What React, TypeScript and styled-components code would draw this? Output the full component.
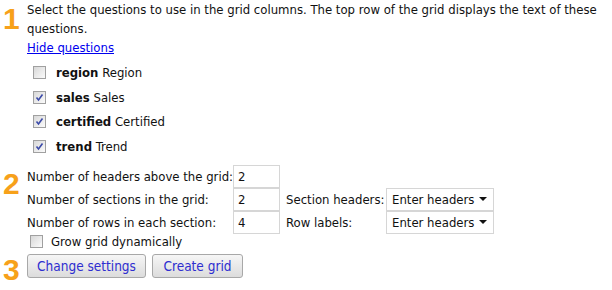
import React from "react";
import styled, { createGlobalStyle } from "styled-components";

const Global = createGlobalStyle`
  html, body { margin: 0; padding: 0; background: #fff; }
  body { font-family: "DejaVu Sans Condensed", "DejaVu Sans", Tahoma, sans-serif; font-size: 13px; color: #111; }
`;

const Page = styled.div`
  width: 612px;
  height: 290px;
  padding-top: 0;
  box-sizing: border-box;
  display: flex;
  flex-direction: column;
`;

const Step = styled.div<{ $mt?: number }>`
  display: grid;
  grid-template-columns: 27px 1fr;
  margin-top: ${(p) => p.$mt ?? 0}px;
`;

const StepNum = styled.div<{ $pt?: number }>`
  color: #f7a11a;
  font-family: "Liberation Sans", Arial, sans-serif;
  font-weight: bold;
  font-size: 30px;
  line-height: 30px;
  padding-left: 3px;
  padding-top: ${(p) => p.$pt ?? 0}px;
`;

const Body = styled.div`
  display: flex;
  flex-direction: column;
`;

const Para = styled.div`
  line-height: 19px;
  width: 580px;
`;

const Link = styled.a`
  color: #0000ee;
  text-decoration: underline;
  line-height: 19px;
  cursor: pointer;
  align-self: flex-start;
`;

const CheckList = styled.div<{ $m?: string }>`
  display: flex;
  flex-direction: column;
  margin: ${(p) => p.$m ?? "3px 0 0 6px"};
`;

const CheckRow = styled.label<{ $h?: number; $gap?: number }>`
  display: flex;
  align-items: center;
  height: ${(p) => p.$h ?? 24.7}px;
  gap: ${(p) => p.$gap ?? 10}px;
`;

const Box = styled.span`
  width: 11px;
  height: 11px;
  border: 1px solid #a0a0a0;
  background: linear-gradient(135deg, #d8d8d8, #fbfbfb);
  display: inline-flex;
  align-items: center;
  justify-content: center;
`;

const Name = styled.b`
  font-weight: bold;
`;

const Check = ({ on }: { on: boolean }) => (
  <Box>
    {on && (
      <svg width="9" height="9" viewBox="0 0 9 9">
        <path d="M1.5 4.5 L3.5 7 L7.5 1.5" stroke="#3b4aa8" strokeWidth="1.6" fill="none" />
      </svg>
    )}
  </Box>
);

const FormGrid = styled.div`
  display: grid;
  grid-template-columns: 206px 47px 106px 108px;
  grid-auto-rows: 23px;
  align-items: center;
`;

const Input = styled.div`
  box-sizing: border-box;
  width: 47px;
  height: 23px;
  border: 1px solid #d6d6d6;
  padding-left: 4px;
  display: flex;
  align-items: center;
`;

const Select = styled.div`
  width: 108px;
  height: 23px;
  box-sizing: border-box;
  border: 1px solid #d6d6d6;
  display: flex;
  align-items: center;
  justify-content: space-between;
  padding: 0 6px 0 5px;
`;

const Caret = styled.span`
  width: 0;
  height: 0;
  border-left: 4px solid transparent;
  border-right: 4px solid transparent;
  border-top: 4px solid #111;
`;

const Label = styled.span<{ $pl?: number }>`
  padding-left: ${(p) => p.$pl ?? 0}px;
  white-space: nowrap;
`;

const Buttons = styled.div`
  display: flex;
  gap: 6px;
  padding-top: 5px;
`;

const Button = styled.button<{ $w: number }>`
  font-family: "DejaVu Sans Condensed", "DejaVu Sans", Tahoma, sans-serif;
  font-size: 13.5px;
  color: #2e2ed0;
  width: ${(p) => p.$w}px;
  height: 24px;
  padding: 0;
  border: 1px solid #a8a8a8;
  border-radius: 3px;
  background: linear-gradient(#f6f6f6, #dcdcdc);
`;

export default function App() {
  return (
    <>
      <Global />
      <Page>
        <Step>
          <StepNum $pt={4}>1</StepNum>
          <Body>
            <Para>
              Select the questions to use in the grid columns. The top row of the grid displays the text of these
              questions.
            </Para>
            <Link>Hide questions</Link>
            <CheckList>
              <CheckRow><Check on={false} /><span><Name>region</Name> Region</span></CheckRow>
              <CheckRow><Check on /><span><Name>sales</Name> Sales</span></CheckRow>
              <CheckRow><Check on /><span><Name>certified</Name> Certified</span></CheckRow>
              <CheckRow><Check on /><span><Name>trend</Name> Trend</span></CheckRow>
            </CheckList>
          </Body>
        </Step>
        <Step $mt={6}>
          <StepNum $pt={4}>2</StepNum>
          <Body>
            <FormGrid>
              <Label>Number of headers above the grid:</Label>
              <Input>2</Input>
              <span />
              <span />
              <Label>Number of sections in the grid:</Label>
              <Input>2</Input>
              <Label $pl={6}>Section headers:</Label>
              <Select>Enter headers<Caret /></Select>
              <Label>Number of rows in each section:</Label>
              <Input>4</Input>
              <Label $pl={6}>Row labels:</Label>
              <Select>Enter headers<Caret /></Select>
            </FormGrid>
            <CheckList $m="0 0 0 3px">
              <CheckRow $h={15} $gap={8}><Check on={false} /><span>Grow grid dynamically</span></CheckRow>
            </CheckList>
          </Body>
        </Step>
        <Step>
          <StepNum $pt={6}>3</StepNum>
          <Buttons>
            <Button $w={119}>Change settings</Button>
            <Button $w={91}>Create grid</Button>
          </Buttons>
        </Step>
      </Page>
    </>
  );
}
